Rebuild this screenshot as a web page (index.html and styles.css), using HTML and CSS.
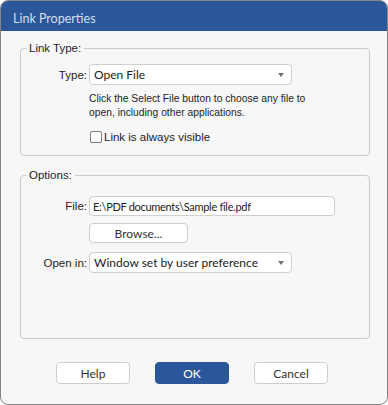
FILE: index.html
```html
<!DOCTYPE html>
<html lang="en">
<head>
    <meta charset="UTF-8">
    <meta name="viewport" content="width=device-width, initial-scale=1.0">
    <title>Link Properties</title>
    <link rel="stylesheet" href="styles.css">
</head>
<body>
    <div class="dialog">
        <div class="titlebar">Link Properties</div>
        <div class="main">
            <fieldset class="group">
                <legend>Link Type:</legend>
                <div class="group-body link-type">
                    <div class="row">
                        <label>Type:</label>
                        <div class="combo">Open File<span class="arrow"></span></div>
                    </div>
                    <p class="hint">Click the Select File button to choose any file to<br>open, including other applications.</p>
                    <label class="check"><input type="checkbox"><span>Link is always visible</span></label>
                </div>
            </fieldset>
            <fieldset class="group options">
                <legend>Options:</legend>
                <div class="group-body">
                    <div class="row">
                        <label for="file">File:</label>
                        <input type="text" id="file" class="field" value="E:\PDF documents\Sample file.pdf">
                    </div>
                    <div class="row browse-row">
                        <button class="btn browse">Browse...</button>
                    </div>
                    <div class="row open-row">
                        <label>Open in:</label>
                        <div class="combo">Window set by user preference<span class="arrow"></span></div>
                    </div>
                </div>
            </fieldset>
        </div>
        <div class="footer">
            <button class="btn">Help</button>
            <button class="btn primary">OK</button>
            <button class="btn">Cancel</button>
        </div>
    </div>
</body>
</html>
```

FILE: styles.css
```css
body {
    margin: 0;
    padding: 0;
    background-color: #ffffff;
    font-family: "Liberation Sans", Arial, sans-serif;
    font-size: 11px;
    color: #1e1e1e;
}
.dialog {
    width: 388px;
    height: 405px;
    box-sizing: border-box;
    border: 1px solid #858585;
    border-radius: 8px;
    overflow: hidden;
    background-color: #f7f7f7;
    display: flex;
    flex-direction: column;
}
.titlebar {
    height: 30px;
    box-sizing: border-box;
    padding: 6px 0 0 12px;
    background-color: #2b579a;
    color: #d3deee;
    font-family: Lato, "Open Sans", sans-serif;
    font-size: 12.5px;
    line-height: 24px;
}
.main {
    flex: 1;
    display: flex;
    flex-direction: column;
    padding: 9px 17px 0 19px;
}
.group {
    margin: 0;
    padding: 0;
    border: 1px solid #cacaca;
    border-radius: 4px;
    min-width: 0;
}
.group legend {
    margin-left: 5px;
    padding: 0 3px;
    line-height: 16px;
    font-size: 11.5px;
}
.options {
    flex: 1;
    margin-top: 11px;
}
.group-body {
    padding: 13px 0 0 0;
}
.link-type {
    padding: 8px 0 11px 0;
}
.row {
    display: flex;
    align-items: center;
}
.row label {
    width: 66px;
    margin-right: 2px;
    text-align: right;
    font-size: 11.5px;
}
.combo,
.field {
    position: relative;
    box-sizing: border-box;
    width: 203px;
    height: 21px;
    padding: 0 4px;
    background-color: #ffffff;
    border: 1px solid #cfcfcf;
    border-radius: 4px;
    font-family: Lato, "Open Sans", sans-serif;
    font-size: 12px;
    line-height: 19px;
    color: #222222;
}
.field {
    width: 246px;
    height: 20px;
    margin: 0;
    padding: 0 3px;
    font-size: 11px;
    letter-spacing: -0.3px;
    outline: none;
}
.arrow {
    position: absolute;
    right: 7px;
    top: 8px;
    width: 0;
    height: 0;
    border-left: 3px solid transparent;
    border-right: 3px solid transparent;
    border-top: 4px solid #707070;
}
.hint {
    margin: 7px 0 0 68px;
    font-size: 10.3px;
    line-height: 14px;
}
.check {
    display: flex;
    align-items: center;
    margin: 10px 0 0 69px;
    height: 14px;
}
.check input {
    appearance: none;
    margin: 0 2px 0 0;
    width: 12px;
    height: 12px;
    border: 1px solid #7a7a7a;
    border-radius: 2px;
    background-color: #ffffff;
}
.check span {
    font-size: 11.5px;
}
.btn {
    box-sizing: border-box;
    width: 74px;
    height: 22px;
    padding: 0;
    border: 1px solid #cdcdcd;
    border-radius: 4px;
    background-color: #ffffff;
    color: #333333;
    font-family: Lato, "Open Sans", sans-serif;
    font-size: 12px;
}
.browse-row {
    margin-top: 7px;
    padding-left: 68px;
}
.browse {
    width: 99px;
    height: 20px;
}
.open-row {
    margin-top: 9px;
}
.primary {
    background-color: #2b579a;
    border-color: #2b579a;
    color: #ffffff;
}
.footer {
    display: flex;
    gap: 25px;
    padding: 23px 0 20px 55px;
}
```
